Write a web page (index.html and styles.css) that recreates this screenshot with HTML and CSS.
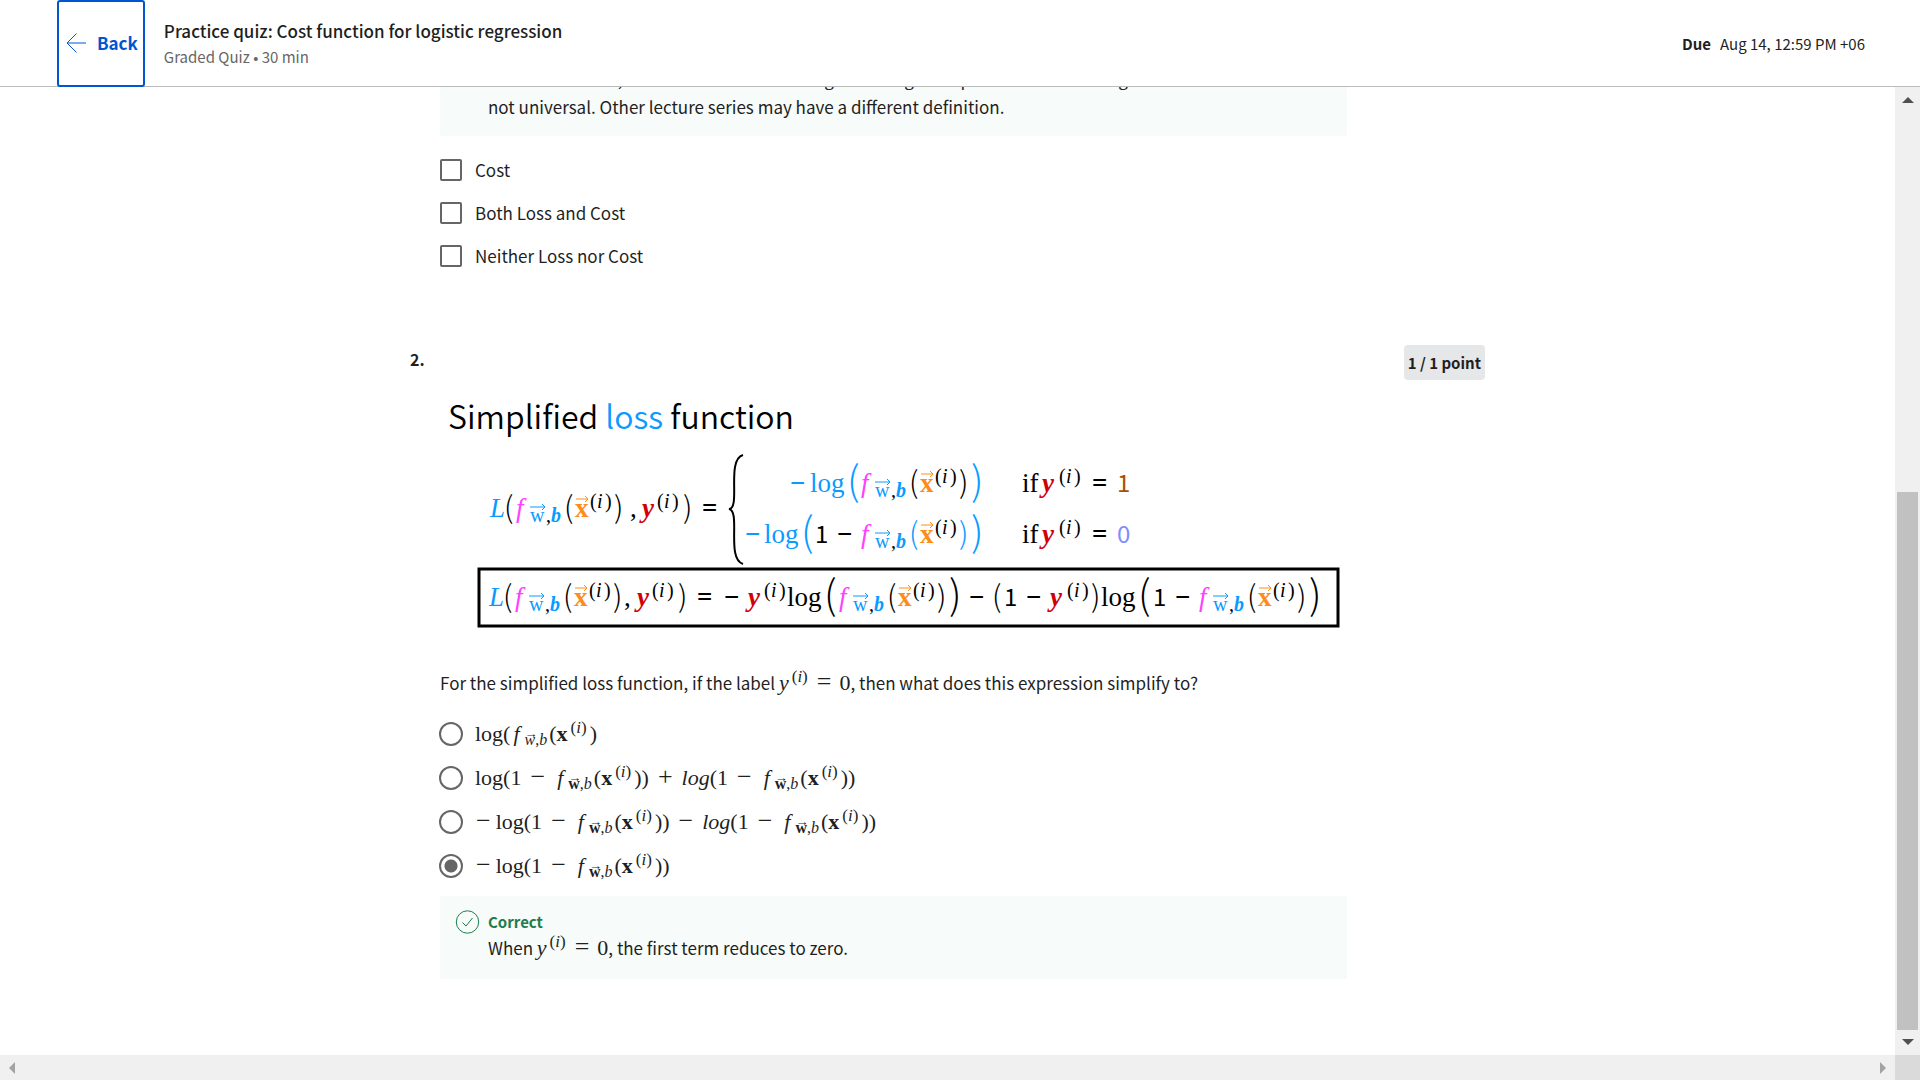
FILE: index.html
```
<!DOCTYPE html>
<html lang="en">
<head>
<meta charset="utf-8">
<title>Practice quiz: Cost function for logistic regression</title>
<meta name="viewport" content="width=device-width, initial-scale=1">
<link rel="stylesheet" href="styles.css">
</head>
<body>
<header class="topbar">
  <button class="back" type="button">
    <svg class="back-icon" viewBox="0 0 20 20" aria-hidden="true"><path d="M10.500.5L1 10l9.500 9.500M1 10h19"/></svg>
    <span>Back</span>
  </button>
  <div class="heading">
    <h1 class="title">Practice quiz: Cost function for logistic regression</h1>
    <p class="subtitle">Graded Quiz • 30 min</p>
  </div>
  <p class="due"><strong>Due</strong><span>Aug 14, 12:59 PM +06</span></p>
</header>

<div class="viewport">
  <main class="pane">
    <div class="quiz">
      <section class="question first">
        <div class="body">
          <div class="feedback continued">
            <p class="explain">In these lectures, loss is calculated on a single training example. It is worth noting that this definition is not universal. Other lecture series may have a different definition.</p>
          </div>
          <div class="checks">
            <label class="choice check"><input type="checkbox">Cost</label>
            <label class="choice check"><input type="checkbox">Both Loss and Cost</label>
            <label class="choice check"><input type="checkbox">Neither Loss nor Cost</label>
          </div>
        </div>
      </section>

      <section class="question">
        <span class="number">2.</span>
        <div class="body">
          <svg class="slide" viewBox="0 0 907 250" role="img" aria-label="Simplified loss function">
            <defs>
              <g id="sup"><text class="s"><tspan x="0">(</tspan><tspan class="i" x="7">i</tspan><tspan x="15">)</tspan></text></g>
              <g id="term">
                <text class="m mag i" x="1">f</text>
                <text class="sub blue" x="15" y="5">w</text>
                <path class="arrow blue-line" d="M15-10h15M27-13l3 3-3 3"/>
                <text class="sub" x="31" y="5">,</text>
                <text class="sub blue bi" x="36" y="5">b</text>
                <text class="p" x="49" y="1">(</text>
                <text class="m orange b" x="60">x</text>
                <path class="arrow orange-line" d="M61-18h12M70-21l3 3-3 3"/>
                <use href="#sup" x="75" y="-9"/>
                <text class="p" x="99" y="1">)</text>
              </g>
            </defs>
            <text class="slide-title" x="8" y="39">Simplified <tspan class="blue">loss</tspan> function</text>

            <g>
              <text class="m blue i" x="50" y="127">L</text>
              <text class="p" x="64" y="128">(</text>
              <use href="#term" x="75" y="127"/>
              <text class="m" x="190" y="127">,</text>
              <text class="m red bi" x="202" y="127">y</text>
              <use href="#sup" x="217" y="118"/>
              <text class="p" x="243" y="128">)</text>
              <text class="m b" x="262" y="127">=</text>
            </g>
            <path class="brace" d="M303 65C286 70 301 118 289 119C301 121 286 169 303 174"/>

            <g>
              <text class="m blue b" x="350" y="102">−</text>
              <text class="m blue" x="370" y="102">log</text>
              <text class="big blue" x="407" y="105">(</text>
              <use href="#term" x="420" y="102"/>
              <text class="big blue" x="531" y="105">)</text>
              <text class="m" x="582" y="102">if</text>
              <text class="m red bi" x="602" y="102">y</text>
              <use href="#sup" x="619" y="93"/>
              <text class="m b" x="652" y="102">=</text>
              <text class="m num brown" x="677" y="102">1</text>
            </g>
            <g>
              <text class="m blue b" x="305" y="153">−</text>
              <text class="m blue" x="324" y="153">log</text>
              <text class="big blue" x="361" y="156">(</text>
              <text class="m num" x="375" y="153">1</text>
              <text class="m b" x="397" y="153">−</text>
              <use class="bluep" href="#term" x="420" y="153"/>
              <text class="big blue" x="531" y="156">)</text>
              <text class="m" x="582" y="153">if</text>
              <text class="m red bi" x="602" y="153">y</text>
              <use href="#sup" x="619" y="144"/>
              <text class="m b" x="652" y="153">=</text>
              <text class="m num violet" x="677" y="153">0</text>
            </g>

            <rect class="frame" x="39" y="179" width="859" height="57"/>
            <g>
              <text class="m blue i" x="49" y="216">L</text>
              <text class="p" x="63" y="217">(</text>
              <use href="#term" x="74" y="216"/>
              <text class="m" x="184" y="216">,</text>
              <text class="m red bi" x="197" y="216">y</text>
              <use href="#sup" x="212" y="207"/>
              <text class="p" x="238" y="217">)</text>
              <text class="m b" x="257" y="216">=</text>
              <text class="m b" x="284" y="216">−</text>
              <text class="m red bi" x="308" y="216">y</text>
              <use href="#sup" x="324" y="207"/>
              <text class="m" x="347" y="216">log</text>
              <text class="big" x="384" y="219">(</text>
              <use href="#term" x="398" y="216"/>
              <text class="big" x="509" y="219">)</text>
              <text class="m b" x="529" y="216">−</text>
              <text class="p" x="552" y="217">(</text>
              <text class="m num" x="564" y="216">1</text>
              <text class="m b" x="586" y="216">−</text>
              <text class="m red bi" x="610" y="216">y</text>
              <use href="#sup" x="627" y="207"/>
              <text class="p" x="651" y="217">)</text>
              <text class="m" x="661" y="216">log</text>
              <text class="big" x="698" y="219">(</text>
              <text class="m num" x="713" y="216">1</text>
              <text class="m b" x="735" y="216">−</text>
              <use href="#term" x="758" y="216"/>
              <text class="big" x="869" y="219">)</text>
            </g>
          </svg>

          <p class="prompt">For the simplified loss function, if the label <span class="math"><i>y</i><sup>(<i>i</i>)</sup><span class="rel">=</span>0</span>, then what does this expression simplify to?</p>

          <div class="radios">
            <label class="choice radio"><input type="radio" name="q2"><span class="math">log(<i class="fn">f</i><sub><i class="vec">w</i>,<i>b</i></sub>(<b>x</b><sup>(<i>i</i>)</sup>)</span></label>
            <label class="choice radio"><input type="radio" name="q2"><span class="math">log(1<span class="op">−</span><i class="fn">f</i><sub><b class="vec">w</b>,<i>b</i></sub>(<b>x</b><sup>(<i>i</i>)</sup>))<span class="op">+</span><i>log</i>(1<span class="op">−</span><i class="fn">f</i><sub><b class="vec">w</b>,<i>b</i></sub>(<b>x</b><sup>(<i>i</i>)</sup>))</span></label>
            <label class="choice radio"><input type="radio" name="q2"><span class="math"><span class="neg">−</span>log(1<span class="op">−</span><i class="fn">f</i><sub><b class="vec">w</b>,<i>b</i></sub>(<b>x</b><sup>(<i>i</i>)</sup>))<span class="op">−</span><i>log</i>(1<span class="op">−</span><i class="fn">f</i><sub><b class="vec">w</b>,<i>b</i></sub>(<b>x</b><sup>(<i>i</i>)</sup>))</span></label>
            <label class="choice radio"><input type="radio" name="q2" checked><span class="math"><span class="neg">−</span>log(1<span class="op">−</span><i class="fn">f</i><sub><b class="vec">w</b>,<i>b</i></sub>(<b>x</b><sup>(<i>i</i>)</sup>))</span></label>
          </div>

          <div class="feedback">
            <svg class="ok" viewBox="0 0 24 24" aria-hidden="true"><circle cx="12" cy="12" r="11.200"/><path d="M7 12.500l3.500 3.500 6.500-8"/></svg>
            <div>
              <strong class="verdict">Correct</strong>
              <p class="explain">When <span class="math"><i>y</i><sup>(<i>i</i>)</sup><span class="rel">=</span>0</span>, the first term reduces to zero.</p>
            </div>
          </div>
        </div>
        <span class="points">1 / 1 point</span>
      </section>
    </div>
  </main>

  <div class="vbar" aria-hidden="true">
    <svg class="vcap" viewBox="0 0 25 25"><path class="dark" d="M7 16l6-6 6 6z"/></svg>
    <div class="vtrack"><div class="thumb"></div></div>
    <svg class="vcap" viewBox="0 0 25 25"><path class="dark" d="M7 9l6 6 6-6z"/></svg>
  </div>
  <div class="hbar" aria-hidden="true">
    <svg class="hcap" viewBox="0 0 25 25"><path class="light" d="M15 7l-6 6 6 6z"/></svg>
    <svg class="hcap" viewBox="0 0 25 25"><path class="light" d="M10 7l6 6-6 6z"/></svg>
  </div>
  <div class="corner"></div>
</div>
</body>
</html>
```
FILE: styles.css
```
* { box-sizing: border-box; }

body {
  margin: 0;
  height: 100vh;
  display: flex;
  flex-direction: column;
  overflow: hidden;
  background: #fff;
  color: #1f1f1f;
  font-family: "Noto Sans CJK JP", "Noto Sans", sans-serif;
  font-size: 17px;
  line-height: 28px;
}

p, h1 { margin: 0; }

/* Header */
.topbar {
  flex: none;
  display: flex;
  align-items: center;
  height: 87px;
  padding: 0 55px 0 57px;
  border-bottom: 1px solid #bbb;
}

.back {
  display: flex;
  align-items: center;
  align-self: flex-start;
  gap: 11px;
  height: 87px;
  padding: 0 5px 1px 7px;
  border: 2px solid #0056d2;
  border-radius: 3px;
  background: #fff;
  color: #0056d2;
  font: inherit;
  font-weight: 700;
}

.back-icon {
  width: 20px;
  height: 20px;
  fill: none;
  stroke: #0056d2;
}

.heading { margin-left: 19px; padding-top: 2px; }
.title { font-size: 17px; font-weight: 500; line-height: 26px; }
.subtitle { font-size: 15px; line-height: 26px; color: #666; }

.due {
  display: flex;
  gap: 9px;
  margin-left: auto;
  padding-top: 2px;
  font-size: 15px;
}

/* Scrolling area */
.viewport {
  flex: 1;
  min-height: 0;
  display: grid;
  grid-template-columns: minmax(0, 1fr) 25px;
  grid-template-rows: minmax(0, 1fr) 25px;
}

.pane {
  display: flex;
  flex-direction: column;
  justify-content: flex-end;
  align-items: center;
  overflow: hidden;
}

.quiz {
  width: 100%;
  max-width: 1075px;
  padding-bottom: 76px;
}

.question {
  display: grid;
  grid-template-columns: 30px minmax(0, 907px) 1fr;
}

.question.first { margin-bottom: 68px; }
.body { grid-column: 2; }
.number { font-size: 16px; font-weight: 700; }

.points {
  justify-self: end;
  align-self: start;
  padding: 0 4px;
  border-radius: 4px;
  background: #e5e7e8;
  font-size: 15px;
  font-weight: 700;
  line-height: 35px;
}

.feedback {
  display: flex;
  gap: 8px;
  padding: 14px 32px 17px 15px;
  background: #f7fbf9;
}

.feedback.continued { padding-left: 48px; padding-bottom: 15px; }

.ok {
  flex: none;
  width: 25px;
  height: 24px;
  fill: none;
  stroke: #1d7c50;
}

.verdict {
  display: block;
  color: #1d7c50;
  font-size: 15px;
  line-height: 24px;
}

.checks { margin-top: 12px; }

.choice {
  display: flex;
  align-items: center;
}

.check { height: 43px; gap: 13px; }
.radio { height: 44px; gap: 12px; }

.choice input {
  flex: none;
  appearance: none;
  margin: 0;
  border: 2px solid #666;
  background: #fff;
}

.check input { width: 22px; height: 22px; border-radius: 2px; }

.radio input {
  width: 24px;
  height: 24px;
  margin-left: -1px;
  border-radius: 50%;
}

.radio input:checked {
  background: radial-gradient(circle, #666 6px, #fff 7px);
}

.prompt { margin-top: 29px; }
.radios { margin: 15px 0 8px; }

/* Inline formulas */
.math {
  font-family: "Liberation Serif", serif;
  font-size: 22px;
  line-height: 1;
  white-space: nowrap;
}

.math sup, .math sub {
  line-height: 0;
}

.math sup { margin: 0 3px; font-size: 17px; vertical-align: 8px; }
.math sub { margin-right: 2px; font-size: 16px; vertical-align: -4px; }
.rel, .op, .neg { font-size: 26px; line-height: 0; }
.rel { margin: 0 8px 0 6px; }
.op { margin: 0 9px; }
.neg { margin: 0 5px 0 1px; }
.fn { margin: 0 5px 0 3px; }

.vec { position: relative; }

.vec::before {
  content: "→";
  position: absolute;
  left: 0;
  top: -2px;
  font-size: 13px;
  line-height: 10px;
  font-weight: 400;
  font-style: normal;
}

/* Lecture slide */
.slide {
  display: block;
  width: 100%;
  margin-top: 45px;
  color: #000;
  fill: currentColor;
  font-family: "Liberation Serif", serif;
}

.slide-title {
  font-family: "Noto Sans CJK JP", sans-serif;
  font-size: 32px;
  font-weight: 350;
}

.m { font-size: 27px; }
.s { font-size: 20px; fill: #000; }
.sub { font-size: 20px; fill: #000; }
.p, .big { font-family: "Noto Sans CJK JP", sans-serif; font-weight: 300; }
.p { font-size: 30px; }
.big { font-size: 40px; }
.num { font-family: "Noto Sans CJK JP", sans-serif; font-size: 24px; }
.i { font-style: italic; }
.b { font-weight: 700; }
.bi { font-style: italic; font-weight: 700; }
.blue { fill: #0a9bff; }
.bluep { fill: #0a9bff; }
.mag { fill: #ff40ff; }
.orange { fill: #ff8c1a; }
.red { fill: #d00008; }
.brown { fill: #a85000; }
.violet { fill: #7f8cff; }
.arrow { fill: none; stroke-width: 1; }
.blue-line { stroke: #0a9bff; }
.orange-line { stroke: #ff8c1a; }
.brace { fill: none; stroke: #000; stroke-width: 2; }
.frame { fill: none; stroke: #000; stroke-width: 3; }

/* Scrollbars */
.vbar {
  display: flex;
  flex-direction: column;
  background: #f0f0f0;
}

.vcap, .hcap { flex: none; width: 25px; height: 25px; }

.vtrack {
  flex: 1;
  display: flex;
  flex-direction: column;
  justify-content: flex-end;
  padding: 0 2px;
}

.thumb { height: 58.6%; background: #c1c1c1; }

.hbar {
  display: flex;
  justify-content: space-between;
  background: #f0f0f0;
}

.corner { background: #dadada; }
.dark { fill: #505050; }
.light { fill: #a3a3a3; }
```
